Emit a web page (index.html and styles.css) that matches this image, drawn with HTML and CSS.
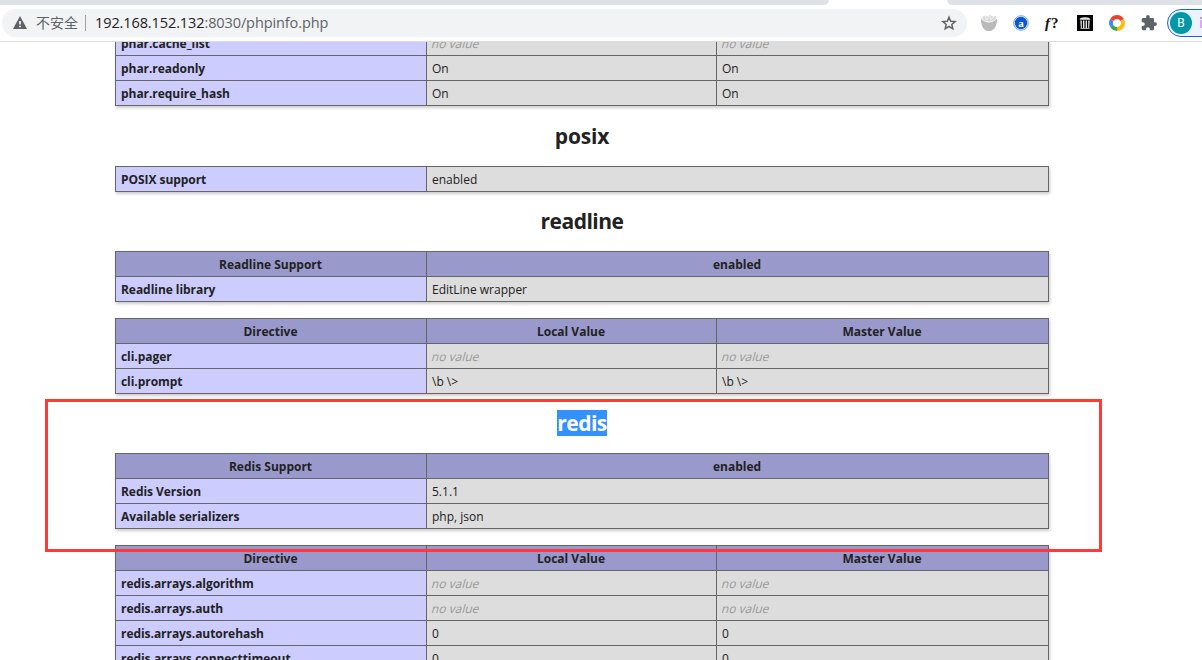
FILE: index.html
```html
<!DOCTYPE html>
<html lang="en">
  <head>
    <meta charset="utf-8">
    <title>phpinfo()</title>
    <link rel="stylesheet" href="styles.css">
  </head>
  <body>
    <div class="tabs">
      <div class="tab-left"></div>
      <div class="tab-right"></div>
    </div>
    <div class="toolbar">
      <div class="address">
        <svg class="warning" width="14" height="13" viewBox="0 0 14 13">
          <path d="M7 0L14 13H0z" fill="#5f6368"/>
          <path d="M6.2 5h1.6v3.6H6.2zM6.2 9.7h1.6v1.6H6.2z" fill="#fff"/>
        </svg>
        <span class="insecure">不安全</span>
        <span class="divider"></span>
        <span class="url">192.168.152.132<span class="path">:8030/phpinfo.php</span></span>
        <svg class="star" width="16" height="16" viewBox="0 0 16 16">
          <path d="M8 2.200l1.700 4 4.400.4-3.300 2.900 1 4.300L8 11.500l-3.800 2.300 1-4.300-3.300-2.900 4.400-.4z" fill="none" stroke="#5f6368" stroke-width="1.500"/>
        </svg>
      </div>
      <div class="extensions">
        <svg width="16" height="16" viewBox="0 0 16 16">
          <path d="M0 3.500C2 6 5 7.500 8 7.500s6-1.500 8-4C16.300 10 13.500 16 8 16S-.3 10 0 3.500z" fill="#b9b9b9"/>
          <path d="M1 2l3-1.500 2 1L9 0l3 1.500 3-.5v3c-3 3.500-10 3.500-13 .5z" fill="#dadada"/>
          <path d="M4 1l2 4M8 1L6 5M9 1l1 4M13 1l-3 4" stroke="#f4f4f4" stroke-width=".8"/>
        </svg>
        <svg width="16" height="16" viewBox="0 0 16 16">
          <circle cx="8" cy="8" r="7.300" fill="#fff" stroke="#5b9af0" stroke-width=".9"/>
          <circle cx="8" cy="8" r="6.200" fill="#0b57d0"/>
          <text x="8" y="11.500" text-anchor="middle" class="glyph-a">a</text>
        </svg>
        <span class="glyph-f"><i>f</i>?</span>
        <svg width="16" height="16" viewBox="0 0 16 16">
          <path d="M0 0h16v16H0z" fill="#000"/>
          <path d="M2.500 4.800C3 3 5 2.300 8 2.300s5 .7 5.500 2.500zM3.300 5.500h1.500V13H3.800zM6 5.500h1.400V13H6zM8.600 5.500H10V13H8.600zM11.200 5.500h1.500l-.5 7.500h-1zM3.500 13h9v.8h-9z" fill="#e8e8e8"/>
        </svg>
        <svg width="16" height="16" viewBox="0 0 16 16" fill="none" stroke-width="3.800">
          <path d="M2.800 5A6 6 0 0 1 13.200 5" stroke="#ea4335"/>
          <path d="M13.200 5A6 6 0 0 1 8 14" stroke="#fbbc05"/>
          <path d="M8 14A6 6 0 0 1 3 11.300" stroke="#34a853"/>
          <path d="M3 11.300A6 6 0 0 1 2.800 5" stroke="#4285f4"/>
        </svg>
        <svg width="16" height="16" viewBox="1 1 22 22">
          <path fill="#5f6368" d="M20.500 11H19V7c0-1.100-.9-2-2-2h-4V3.500a2.500 2.500 0 0 0-5 0V5H4c-1.100 0-2 .9-2 2v3.800h1.500c1.500 0 2.700 1.200 2.700 2.700S5 16.200 3.500 16.200H2V20c0 1.100.9 2 2 2h3.800v-1.500c0-1.500 1.200-2.700 2.700-2.700s2.700 1.200 2.700 2.700V22H17c1.100 0 2-.9 2-2v-4h1.500a2.500 2.500 0 0 0 0-5z"/>
        </svg>
      </div>
      <div class="profile"><span class="avatar">B</span><span class="profile-badge"></span></div>
    </div>

    <div class="page">
      <table class="clipped">
        <tr><td class="e">phar.cache_list</td><td class="v local"><i>no value</i></td><td class="v"><i>no value</i></td></tr>
        <tr><td class="e">phar.readonly</td><td class="v">On</td><td class="v">On</td></tr>
        <tr><td class="e">phar.require_hash</td><td class="v">On</td><td class="v">On</td></tr>
      </table>
      <h2 class="first">posix</h2>
      <table>
        <tr><td class="e">POSIX support</td><td class="v">enabled</td></tr>
      </table>
      <h2>readline</h2>
      <table>
        <tr class="h"><th class="name">Readline Support</th><th>enabled</th></tr>
        <tr><td class="e">Readline library</td><td class="v">EditLine wrapper</td></tr>
      </table>
      <table class="next">
        <tr class="h"><th class="name">Directive</th><th class="local">Local Value</th><th>Master Value</th></tr>
        <tr><td class="e">cli.pager</td><td class="v"><i>no value</i></td><td class="v"><i>no value</i></td></tr>
        <tr><td class="e">cli.prompt</td><td class="v">\b \&gt;</td><td class="v">\b \&gt;</td></tr>
      </table>
      <h2><span class="selected">redis</span></h2>
      <table>
        <tr class="h"><th class="name">Redis Support</th><th>enabled</th></tr>
        <tr><td class="e">Redis Version</td><td class="v">5.1.1</td></tr>
        <tr><td class="e">Available serializers</td><td class="v">php, json</td></tr>
      </table>
      <table class="next">
        <tr class="h"><th class="name">Directive</th><th class="local">Local Value</th><th>Master Value</th></tr>
        <tr><td class="e">redis.arrays.algorithm</td><td class="v"><i>no value</i></td><td class="v"><i>no value</i></td></tr>
        <tr><td class="e">redis.arrays.auth</td><td class="v"><i>no value</i></td><td class="v"><i>no value</i></td></tr>
        <tr><td class="e">redis.arrays.autorehash</td><td class="v">0</td><td class="v">0</td></tr>
        <tr><td class="e">redis.arrays.connecttimeout</td><td class="v">0</td><td class="v">0</td></tr>
      </table>
    </div>
    <div class="marker"></div>
  </body>
</html>
```
FILE: styles.css
```css
* {
  box-sizing: border-box;
}

body {
  margin: 0;
  height: 660px;
  overflow: hidden;
  display: flex;
  flex-direction: column;
  background-color: #fff;
  color: #222;
  font-family: "Open Sans", "Noto Sans CJK SC", sans-serif;
  font-size: 12px;
}

/* browser chrome */
.tabs {
  display: flex;
  justify-content: space-between;
  flex: none;
  height: 5px;
}

.tab-left {
  width: 829px;
  background-color: #dee1e6;
  border-bottom-right-radius: 6px;
}

.tab-right {
  width: 255px;
  background-color: #dee1e6;
  border-bottom-left-radius: 6px;
}

.toolbar {
  display: flex;
  align-items: center;
  flex: none;
  height: 37px;
  padding: 0 0 1px 2px;
  border-bottom: 1px solid #dcdcdc;
}

.address {
  display: flex;
  align-items: center;
  width: 965px;
  height: 28px;
  padding: 0 10px 0 11px;
  border-radius: 14px;
  background-color: #f1f3f4;
}

.insecure {
  margin-left: 9px;
  color: #5f6368;
  font-family: "Noto Sans CJK SC", sans-serif;
  font-size: 14px;
  line-height: 26px;
  height: 28px;
}

.divider {
  width: 1px;
  height: 16px;
  margin: 0 9px 0 7px;
  background-color: #9aa0a6;
}

.url {
  font-size: 14.5px;
  letter-spacing: -0.1px;
  line-height: 28px;
}

.path {
  color: #5f6368;
}

.star {
  margin-left: auto;
}

.extensions {
  display: flex;
  align-items: center;
  gap: 16px;
  margin-left: 14px;
}

.extensions svg {
  display: block;
}

.glyph-a {
  fill: #fff;
  font: bold 11px "Liberation Serif", serif;
}

.glyph-f {
  width: 16px;
  color: #111;
  font: bold 15px/16px "Liberation Serif", serif;
  letter-spacing: 1px;
  white-space: nowrap;
}

.profile {
  display: flex;
  align-items: center;
  gap: 8px;
  width: 60px;
  height: 28px;
  margin-left: 10px;
  margin-right: -40px;
  padding-left: 2px;
  border: 1px solid #1a66d9;
  border-radius: 14px;
  background-color: #edf3fd;
}

.avatar {
  flex: none;
  width: 22px;
  height: 22px;
  border-radius: 50%;
  background-color: #0097a7;
  color: #fff;
  font: 12px/22px Roboto, sans-serif;
  text-align: center;
}

.profile-badge {
  width: 2px;
  height: 11px;
  border-top: 2px solid #c893dc;
  border-bottom: 8px solid #d9aee8;
}

/* phpinfo page */
.page {
  flex: 1;
  min-height: 0;
  overflow: hidden;
}

table {
  width: 934px;
  margin-left: 115px;
  border-collapse: collapse;
  table-layout: fixed;
  box-shadow: 1px 2px 3px #ccc;
}

.clipped {
  margin-top: -12px;
}

.next {
  margin-top: 16px;
}

tr {
  height: 25px;
}

td, th {
  border: 1px solid #666;
  padding: 2px 5px 0;
  line-height: 22px;
  white-space: nowrap;
}

th {
  padding-right: 6px;
}

.e {
  width: 311px;
  background-color: #ccf;
  font-weight: bold;
  letter-spacing: -0.05px;
}

.name {
  width: 311px;
}

.local {
  width: 290px;
}

.h {
  background-color: #99c;
  font-weight: bold;
}

.v {
  background-color: #ddd;
}

.v i {
  display: inline-block;
  color: #999;
  font-style: normal;
  transform: skewX(-16deg);
}

h2 {
  width: 934px;
  height: 59px;
  margin: 0 0 0 115px;
  padding-top: 16px;
  font-size: 21px;
  letter-spacing: -0.5px;
  line-height: 27px;
  text-align: center;
}

.first {
  height: 60px;
  padding-top: 17px;
  letter-spacing: -0.2px;
}

.selected {
  display: inline-block;
  height: 26px;
  line-height: 26px;
  background-color: #3390ff;
  color: #fff;
}

/* red highlight frame over the redis section */
.marker {
  position: absolute;
  left: 45px;
  top: 399px;
  width: 1057px;
  height: 153px;
  border: 3px solid #ff3838;
}
```
